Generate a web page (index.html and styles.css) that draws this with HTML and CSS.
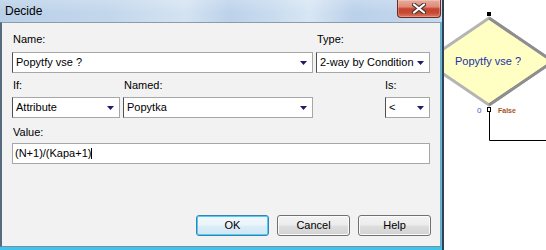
FILE: index.html
```html
<!DOCTYPE html>
<html>
<head>
<meta charset="utf-8">
<title>Decide</title>
<link rel="stylesheet" href="styles.css">
</head>
<body>
<div class="screen">
  <svg class="diagram" width="546" height="250" viewBox="0 0 546 250">
    <rect x="487" y="12" width="4" height="4" fill="#000"/>
    <polygon points="489,18 553,61.5 489,105 425,61.5" fill="#ffffc4" stroke="#b4b4b4" stroke-width="3" stroke-linejoin="miter"/>
    <polyline points="489,18 553,61.5 489,105" fill="none" stroke="#8e8e8e" stroke-width="3"/>
    <text x="455" y="64.5" class="node-label">Popytfy vse ?</text>
    <text x="477" y="113" class="exit-num">0</text>
    <rect x="487.5" y="107.5" width="3" height="4" fill="none" stroke="#000" stroke-width="1"/>
    <text x="498" y="113" class="exit-label">False</text>
    <polyline points="489.5,111 489.5,140.5 546,140.5" fill="none" stroke="#000" stroke-width="1"/>
  </svg>

  <div class="window">
    <div class="titlebar">
      <span class="title">Decide</span>
      <div class="close">
        <svg width="14" height="11" viewBox="0 0 14 11">
          <path d="M2 1.5 L12 9.5 M12 1.5 L2 9.5" stroke="#4b3434" stroke-width="4.2" stroke-linecap="round"/>
          <path d="M2 1.5 L12 9.5 M12 1.5 L2 9.5" stroke="#ffffff" stroke-width="2.2" stroke-linecap="round"/>
        </svg>
      </div>
    </div>
    <div class="client">
      <div class="form">
        <div class="lbl c-name">Name:</div>
        <div class="lbl c-type">Type:</div>
        <div class="combo c-name-box"><span class="val">Popytfy vse ?</span><svg class="arrow" width="7" height="4" viewBox="0 0 7 4"><polygon points="0,0 7,0 3.5,4" fill="#1d1d6b"/></svg></div>
        <div class="combo c-type-box"><span class="val">2-way by Condition</span><svg class="arrow" width="7" height="4" viewBox="0 0 7 4"><polygon points="0,0 7,0 3.5,4" fill="#1d1d6b"/></svg></div>

        <div class="lbl c-if">If:</div>
        <div class="lbl c-named">Named:</div>
        <div class="lbl c-is">Is:</div>
        <div class="combo c-if-box"><span class="val">Attribute</span><svg class="arrow" width="7" height="4" viewBox="0 0 7 4"><polygon points="0,0 7,0 3.5,4" fill="#1d1d6b"/></svg></div>
        <div class="combo c-named-box"><span class="val">Popytka</span><svg class="arrow" width="7" height="4" viewBox="0 0 7 4"><polygon points="0,0 7,0 3.5,4" fill="#1d1d6b"/></svg></div>
        <div class="combo c-is-box"><span class="val">&lt;</span><svg class="arrow" width="7" height="4" viewBox="0 0 7 4"><polygon points="0,0 7,0 3.5,4" fill="#1d1d6b"/></svg></div>

        <div class="lbl c-value">Value:</div>
        <div class="textbox c-value-box"><span class="val">(N+1)/(Kapa+1)</span><span class="caret"></span></div>
      </div>
      <div class="buttons">
        <div class="btn default">OK</div>
        <div class="btn">Cancel</div>
        <div class="btn">Help</div>
      </div>
    </div>
  </div>
</div>
</body>
</html>
```

FILE: styles.css
```css
html, body {
  margin: 0;
  padding: 0;
  background: #ffffff;
}

body {
  font-family: "Liberation Sans", Arial, sans-serif;
  font-size: 11px;
  color: #000;
}

.screen {
  position: relative;
  width: 546px;
  height: 250px;
  overflow: hidden;
  background: #ffffff;
}

.diagram {
  position: absolute;
  left: 0;
  top: 0;
}

.node-label {
  font-family: "Liberation Sans", Arial, sans-serif;
  font-size: 11px;
  fill: #1a33a6;
}

.exit-num {
  font-family: "Liberation Sans", Arial, sans-serif;
  font-size: 8px;
  fill: #3a5ad0;
}

.exit-label {
  font-family: "Liberation Sans", Arial, sans-serif;
  font-size: 7px;
  font-weight: bold;
  fill: #a5541c;
}

/* window frame */
.window {
  position: relative;
  z-index: 1;
  width: 444px;
  height: 250px;
  box-sizing: border-box;
  display: flex;
  flex-direction: column;
  border-right: 2px solid #2f4254;
  padding-right: 1px;
  padding-bottom: 3px;
  background: linear-gradient(#bcd3ea 0, #bcd3ea 22px, #3fc4ef 22px, #3fc4ef 100%);
}

.titlebar {
  height: 22px;
  flex: none;
  display: flex;
  align-items: flex-start;
  margin-right: -1px;
  background:
    linear-gradient(180deg, rgba(255,255,255,0.18), rgba(255,255,255,0) 60%),
    linear-gradient(90deg, #b9d0e8 0%, #c3d7ec 25%, #d4e3f2 42%, #bcd2ea 52%, #c9dcef 62%, #d8e6f4 70%, #bad1ea 80%, #c6d9ee 100%);
}

.title {
  font-family: "Liberation Sans", Arial, sans-serif;
  font-size: 12px;
  line-height: 22px;
  padding-left: 5px;
  color: #000;
}

.close {
  margin-left: auto;
  margin-right: 1px;
  width: 44px;
  height: 18px;
  box-sizing: border-box;
  border: 1px solid #6e2a20;
  border-top: none;
  border-radius: 0 0 4px 4px;
  background: linear-gradient(180deg, #e9ab9c 0%, #dd8b79 40%, #c8432e 52%, #c64a33 75%, #dc7a5e 100%);
  box-shadow: inset 0 0 0 1px rgba(255,255,255,0.25);
  display: flex;
  align-items: center;
  justify-content: center;
}

.close svg {
  display: block;
  margin-top: -1px;
}

.client {
  flex: 1;
  background: #f2f2f2;
  border-top: 1px solid #8c9cab;
  border-left: 2px solid #566c7e;
  border-right: 1px solid #8c9cab;
  border-bottom: 1px solid #7d8d9c;
  display: flex;
  flex-direction: column;
}

/* form grid */
.form {
  padding: 10px 10px 0 10px;
  display: grid;
  grid-template-columns: 108px 190px 66px 45px;
  grid-template-rows: 19px 27px 18px 29px 17px 21px;
  column-gap: 3px;
}

.lbl {
  line-height: 13px;
  white-space: nowrap;
}

.c-name { grid-column: 1 / 3; grid-row: 1; padding-left: 1px; }
.c-type { grid-column: 3 / 5; grid-row: 1; padding-left: 1px; }
.c-name-box { grid-column: 1 / 3; grid-row: 2; }
.c-type-box { grid-column: 3 / 5; grid-row: 2; }
.c-if { grid-column: 1; grid-row: 3; padding-left: 1px; }
.c-named { grid-column: 2; grid-row: 3; padding-left: 1px; }
.c-is { grid-column: 4; grid-row: 3; }
.c-if-box { grid-column: 1; grid-row: 4; }
.c-named-box { grid-column: 2; grid-row: 4; }
.c-is-box { grid-column: 4; grid-row: 4; }
.c-value { grid-column: 1 / 5; grid-row: 5; padding-left: 1px; }
.c-value-box { grid-column: 1 / 5; grid-row: 6; }

.combo, .textbox {
  height: 21px;
  box-sizing: border-box;
  background: #ffffff;
  border: 1px solid #a7a7a7;
  display: flex;
  align-items: flex-start;
  white-space: nowrap;
  overflow: hidden;
}

.combo {
  border-left-color: #505050;
  padding-left: 3px;
  padding-right: 5px;
}

.textbox {
  padding-left: 2px;
}

.val {
  line-height: 18px;
}

.combo .val {
  flex: 1;
}

.arrow {
  align-self: center;
  flex: none;
  display: block;
}

.caret {
  display: block;
  width: 1px;
  height: 11px;
  margin-top: 4px;
  background: #000;
}

/* buttons */
.buttons {
  display: flex;
  justify-content: flex-end;
  gap: 8px;
  margin-top: 51px;
  padding-right: 9px;
}

.btn {
  width: 73px;
  height: 21px;
  box-sizing: border-box;
  border: 1px solid #707070;
  border-radius: 3px;
  background: linear-gradient(180deg, #f3f3f3 0%, #ececec 48%, #dedede 52%, #d2d2d2 100%);
  box-shadow: inset 0 0 0 1px #fbfbfb;
  text-align: center;
  line-height: 19px;
}

.btn.default {
  border-color: #3c7fb1;
  background: linear-gradient(180deg, #f2f8fc 0%, #eaf4fa 48%, #dceef8 52%, #cfe6f4 100%);
  box-shadow: inset 0 0 0 1px #4ad0f8;
}
```
